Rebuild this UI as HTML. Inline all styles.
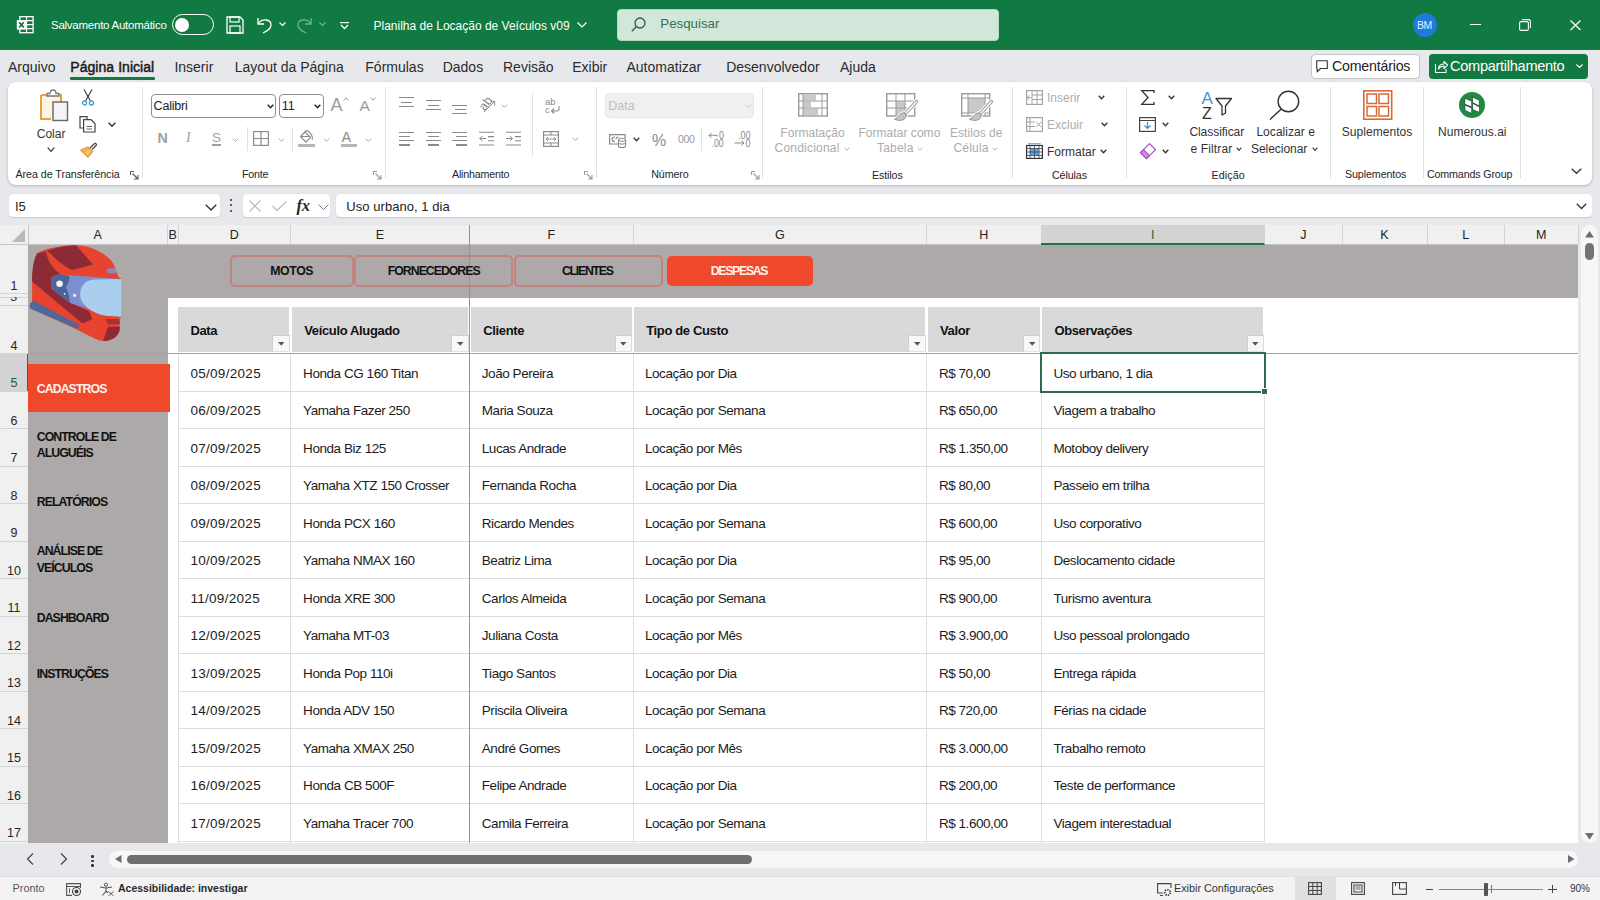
<!DOCTYPE html><html><head><meta charset="utf-8"><style>
*{margin:0;padding:0;box-sizing:border-box}
html,body{width:1600px;height:900px;overflow:hidden;background:#E6E8EC;font-family:"Liberation Sans",sans-serif;color:#222}
.a{position:absolute}
.t{position:absolute;white-space:nowrap;line-height:1}
svg{position:absolute;overflow:visible}
</style></head><body>
<div class="a" style="left:0px;top:0px;width:1600px;height:50px;background:#117A42;"></div>
<svg style="left:16px;top:16px;" width="18" height="17" viewBox="0 0 18 17"><rect x="3.8" y="0.7" width="13.3" height="16" fill="none" stroke="#fff" stroke-width="1.3"/><path d="M10.6 0.7 V16.7 M10.6 4.6 H17 M10.6 8.6 H17 M10.6 12.6 H17" stroke="#fff" stroke-width="1.1"/><rect x="0.8" y="4.1" width="9.4" height="9.5" fill="#fff"/><path d="M3.2 6.3 L7.8 11.4 M7.8 6.3 L3.2 11.4" stroke="#155E38" stroke-width="1.5"/></svg>
<div class="t" style="left:51px;top:19.62px;font-size:11.5px;color:#fff;font-weight:normal;letter-spacing:-0.25px;">Salvamento Automático</div>
<div class="a" style="left:172px;top:14px;width:42px;height:21px;border:1.5px solid #fff;border-radius:11px"></div>
<div class="a" style="left:175px;top:17.5px;width:14px;height:14px;background:#fff;border-radius:50%"></div>
<svg style="left:226px;top:16px;" width="18" height="18" viewBox="0 0 18 18"><path d="M1 1 H14 L17 4 V17 H1 Z" fill="none" stroke="#fff" stroke-width="1.3"/><rect x="4" y="1" width="9" height="5" fill="none" stroke="#fff" stroke-width="1.2"/><rect x="4" y="10" width="10" height="7" fill="none" stroke="#fff" stroke-width="1.2"/></svg>
<svg style="left:256px;top:16px;" width="17" height="18" viewBox="0 0 17 18"><path d="M2 2 V8 H8" fill="none" stroke="#fff" stroke-width="1.3"/><path d="M2 8 C6 2 15 3 15 9 C15 13 11 15 7 17" fill="none" stroke="#fff" stroke-width="1.3"/></svg>
<svg style="left:279px;top:22px;" width="7" height="5" viewBox="0 0 7 5"><path d="M0.5 0.5 L3.5 3.5 L6.5 0.5" fill="none" stroke="#fff" stroke-width="1.2"/></svg>
<svg style="left:296px;top:16px;" width="17" height="18" viewBox="0 0 17 18"><path d="M15 2 V8 H9" fill="none" stroke="#6FB58B" stroke-width="1.3"/><path d="M15 8 C11 2 2 3 2 9 C2 13 6 15 10 17" fill="none" stroke="#6FB58B" stroke-width="1.3"/></svg>
<svg style="left:319px;top:22px;" width="7" height="5" viewBox="0 0 7 5"><path d="M0.5 0.5 L3.5 3.5 L6.5 0.5" fill="none" stroke="#6FB58B" stroke-width="1.2"/></svg>
<svg style="left:340px;top:22px;" width="9" height="8" viewBox="0 0 9 8"><line x1="0" y1="0.6" x2="9" y2="0.6" stroke="#fff" stroke-width="1.2"/><path d="M1 3 L4.5 6.5 L8 3" fill="none" stroke="#fff" stroke-width="1.3"/></svg>
<div class="t" style="left:373.5px;top:19.55px;font-size:12px;color:#fff;font-weight:normal;letter-spacing:0px;">Planilha de Locação de Veículos v09</div>
<svg style="left:577px;top:22px;" width="10" height="6" viewBox="0 0 10 6"><path d="M0.5 0.5 L5 5 L9.5 0.5" fill="none" stroke="#fff" stroke-width="1.2"/></svg>
<div class="a" style="left:617px;top:9px;width:382px;height:32px;background:#D1E7D9;border-radius:4px;border:1px solid #B9D7C3"></div>
<svg style="left:631px;top:17px;" width="15" height="15" viewBox="0 0 15 15"><circle cx="9" cy="6" r="5" fill="none" stroke="#2F5E43" stroke-width="1.3"/><line x1="5.5" y1="9.5" x2="0.8" y2="14.2" stroke="#2F5E43" stroke-width="1.4"/></svg>
<div class="t" style="left:660.3px;top:17.30px;font-size:13.3px;color:#3A7150;font-weight:normal;letter-spacing:0px;">Pesquisar</div>
<div class="a" style="left:1413px;top:13px;width:24px;height:24px;background:#1C7BDB;border-radius:50%"></div>
<div class="t" style="left:1417px;top:19.88px;font-size:10.5px;color:#E2F0FF;font-weight:normal;letter-spacing:-0.5px;">BM</div>
<div class="a" style="left:1469.5px;top:23.8px;width:11px;height:1.3px;background:#fff;"></div>
<svg style="left:1519px;top:19px;" width="12" height="12" viewBox="0 0 12 12"><rect x="0.6" y="2.6" width="8.8" height="8.8" rx="1.5" fill="none" stroke="#fff" stroke-width="1.1"/><path d="M3 0.6 H9.5 Q11.4 0.6 11.4 2.5 V9" fill="none" stroke="#fff" stroke-width="1.1"/></svg>
<svg style="left:1569.5px;top:19.8px;" width="11" height="10.5" viewBox="0 0 11 10.5"><path d="M0.5 0.5 L10.5 10 M10.5 0.5 L0.5 10" stroke="#fff" stroke-width="1.2"/></svg>
<div class="t" style="left:8px;top:59.60px;font-size:14px;color:#2B2B2B;font-weight:normal;letter-spacing:0px;">Arquivo</div>
<div class="t" style="left:70.3px;top:59.60px;font-size:14px;color:#1A1A1A;font-weight:normal;letter-spacing:0.05px;-webkit-text-stroke:0.45px #1A1A1A;">Página Inicial</div>
<div class="t" style="left:174.4px;top:59.60px;font-size:14px;color:#2B2B2B;font-weight:normal;letter-spacing:0px;">Inserir</div>
<div class="t" style="left:234.8px;top:59.60px;font-size:14px;color:#2B2B2B;font-weight:normal;letter-spacing:0px;">Layout da Página</div>
<div class="t" style="left:365.3px;top:59.60px;font-size:14px;color:#2B2B2B;font-weight:normal;letter-spacing:0px;">Fórmulas</div>
<div class="t" style="left:442.7px;top:59.60px;font-size:14px;color:#2B2B2B;font-weight:normal;letter-spacing:0px;">Dados</div>
<div class="t" style="left:503px;top:59.60px;font-size:14px;color:#2B2B2B;font-weight:normal;letter-spacing:0px;">Revisão</div>
<div class="t" style="left:572.2px;top:59.60px;font-size:14px;color:#2B2B2B;font-weight:normal;letter-spacing:0px;">Exibir</div>
<div class="t" style="left:626.5px;top:59.60px;font-size:14px;color:#2B2B2B;font-weight:normal;letter-spacing:0px;">Automatizar</div>
<div class="t" style="left:726.2px;top:59.60px;font-size:14px;color:#2B2B2B;font-weight:normal;letter-spacing:0px;">Desenvolvedor</div>
<div class="t" style="left:840px;top:59.60px;font-size:14px;color:#2B2B2B;font-weight:normal;letter-spacing:0px;">Ajuda</div>
<div class="a" style="left:70px;top:77px;width:85px;height:2.5px;background:#117A42;border-radius:1px"></div>
<div class="a" style="left:1311px;top:54px;width:109px;height:25px;background:#fff;border:1px solid #C4C4C4;border-radius:4px"></div>
<svg style="left:1316px;top:60px;" width="12" height="13" viewBox="0 0 12 13"><path d="M0.7 0.7 H11.3 V8.5 H4.5 L1.2 11.8 V8.5 H0.7 Z" fill="none" stroke="#333" stroke-width="1.1" stroke-linejoin="round"/></svg>
<div class="t" style="left:1332px;top:59.23px;font-size:14.2px;color:#222;font-weight:normal;letter-spacing:-0.2px;">Comentários</div>
<div class="a" style="left:1429px;top:54px;width:159px;height:25px;background:#117A42;border-radius:4px"></div>
<svg style="left:1434px;top:59px;" width="14" height="15" viewBox="0 0 14 15"><path d="M1.5 5 V13.5 H12 V10" fill="none" stroke="#fff" stroke-width="1.1"/><path d="M4.5 10 C4.5 6.5 7 5 10 5 V2.3 L13.5 6 L10 9.7 V7 C7.5 7 6 8 4.5 10 Z" fill="none" stroke="#fff" stroke-width="1.1" stroke-linejoin="round"/></svg>
<div class="t" style="left:1450px;top:58.89px;font-size:14.6px;color:#fff;font-weight:normal;letter-spacing:-0.3px;">Compartilhamento</div>
<svg style="left:1576px;top:64px;" width="7" height="5" viewBox="0 0 7 5"><path d="M0.5 0.5 L3.5 3.5 L6.5 0.5" fill="none" stroke="#fff" stroke-width="1.2"/></svg>
<div class="a" style="left:8px;top:82px;width:1584px;height:103px;background:#fff;border-radius:8px;box-shadow:0 1px 3px rgba(0,0,0,0.22)"></div>
<svg style="left:39px;top:89px;" width="30" height="33" viewBox="0 0 30 33"><path d="M2 6 H9 M19 6 H22 V16" fill="none" stroke="#E6A23C" stroke-width="2"/><path d="M2 6 V30 H12" fill="none" stroke="#E6A23C" stroke-width="2"/><rect x="3" y="7" width="18" height="22" fill="#FDF3E2"/><path d="M8 7 V4.5 H11 Q11 1 14 1 Q17 1 17 4.5 H20 V7 Z" fill="#fff" stroke="#777" stroke-width="1.3"/><rect x="14" y="13" width="14.5" height="18.5" fill="#F4F4F4" stroke="#666" stroke-width="1.4"/></svg>
<div class="t" style="left:36.75px;top:127.80px;font-size:12px;color:#333;font-weight:normal;letter-spacing:0px;">Colar</div>
<svg style="left:47.0px;top:147.0px;" width="8" height="5" viewBox="0 0 8 5"><path d="M0.7 0.7 L4.0 4.3 L7.3 0.7" fill="none" stroke="#333" stroke-width="1.2"/></svg>
<svg style="left:81.5px;top:89px;" width="12" height="17" viewBox="0 0 12 17"><path d="M2 0.5 L8.5 12 M10 0.5 L3.5 12" stroke="#333" stroke-width="1.1" fill="none"/><circle cx="2.6" cy="14" r="2" fill="none" stroke="#3AA0D0" stroke-width="1.3"/><circle cx="9.4" cy="14" r="2" fill="none" stroke="#3AA0D0" stroke-width="1.3"/></svg>
<svg style="left:79px;top:116px;" width="18" height="17" viewBox="0 0 18 17"><path d="M8 3 V0.7 H1 V12 H4" fill="none" stroke="#444" stroke-width="1.2"/><path d="M4.6 3.6 H12 L16 7.6 V16 H4.6 Z" fill="#fff" stroke="#444" stroke-width="1.2"/><path d="M7.5 10.5 H13 M7.5 13 H13" stroke="#666" stroke-width="1"/></svg>
<svg style="left:107.75px;top:122.0px;" width="8" height="5" viewBox="0 0 8 5"><path d="M0.7 0.7 L4.0 4.3 L7.3 0.7" fill="none" stroke="#333" stroke-width="1.3"/></svg>
<svg style="left:80px;top:142px;" width="17" height="16" viewBox="0 0 17 16"><path d="M9.5 6.5 L14 2 Q15.5 0.6 16.2 2 L16.5 3 L12 7.5" fill="none" stroke="#444" stroke-width="1.2"/><path d="M8 5 L12.5 9.5 L8 15 L0.8 8.3 Z" fill="#F5C47A" stroke="#E39B2E" stroke-width="1.3"/><path d="M3 10 L9 7" stroke="#E39B2E" stroke-width="1"/></svg>
<div class="t" style="left:15.5px;top:168.91px;font-size:10.7px;color:#262626;font-weight:normal;letter-spacing:-0.05px;">Área de Transferência</div>
<svg style="left:130px;top:171px;" width="9" height="9" viewBox="0 0 9 9"><path d="M0.5 4 V0.5 H4" fill="none" stroke="#555" stroke-width="1"/><path d="M0.5 0.5" /><path d="M2.5 2.5 L8 8 M8 4 V8 H4" fill="none" stroke="#555" stroke-width="1.1"/><path d="M0.5 6 V8.5 H2.5" fill="none" stroke="#555" stroke-width="0"/></svg>
<div class="a" style="left:141.9px;top:87px;width:1px;height:91px;background:#E1E1E1;"></div>
<div class="a" style="left:151.25px;top:93.6px;width:125px;height:24.4px;border:1px solid #8F8F8F;border-radius:4px;background:#fff"></div>
<div class="t" style="left:153.6px;top:100.12px;font-size:12.5px;color:#222;font-weight:normal;letter-spacing:-0.2px;">Calibri</div>
<svg style="left:266.5px;top:103.75px;" width="7" height="4.5" viewBox="0 0 7 4.5"><path d="M0.7 0.7 L3.5 3.8 L6.3 0.7" fill="none" stroke="#222" stroke-width="1.4"/></svg>
<div class="a" style="left:278.6px;top:93.6px;width:45px;height:24.4px;border:1px solid #8F8F8F;border-radius:4px;background:#fff"></div>
<div class="t" style="left:281.7px;top:100.12px;font-size:12.5px;color:#222;font-weight:normal;letter-spacing:0px;">11</div>
<svg style="left:314.1px;top:103.75px;" width="7" height="4.5" viewBox="0 0 7 4.5"><path d="M0.7 0.7 L3.5 3.8 L6.3 0.7" fill="none" stroke="#222" stroke-width="1.4"/></svg>
<div class="t" style="left:330.5px;top:95.50px;font-size:18px;color:#9A9A9A;font-weight:normal;letter-spacing:0px;">A</div>
<svg style="left:342.5px;top:96.5px;" width="6" height="4" viewBox="0 0 6 4"><path d="M0.5 3.5 L3 0.8 L5.5 3.5" fill="none" stroke="#9A9A9A" stroke-width="1"/></svg>
<div class="t" style="left:359.5px;top:97.62px;font-size:15.5px;color:#9A9A9A;font-weight:normal;letter-spacing:0px;">A</div>
<svg style="left:369.5px;top:97px;" width="6" height="4" viewBox="0 0 6 4"><path d="M0.5 0.5 L3 3.2 L5.5 0.5" fill="none" stroke="#9A9A9A" stroke-width="1"/></svg>
<div class="t" style="left:157.5px;top:130.73px;font-size:14.2px;color:#9E9E9E;font-weight:bold;letter-spacing:0px;">N</div>
<div class="t" style="left:186px;top:130.90px;font-size:14px;color:#9E9E9E;font-weight:normal;letter-spacing:0px;font-family:'Liberation Serif',serif;"><i>I</i></div>
<div class="t" style="left:212px;top:131.03px;font-size:13.5px;color:#9E9E9E;font-weight:normal;letter-spacing:0px;">S</div>
<div class="a" style="left:212px;top:144px;width:9px;height:1.5px;background:#9E9E9E;"></div>
<svg style="left:232.1px;top:137.5px;" width="7" height="4" viewBox="0 0 7 4"><path d="M0.7 0.7 L3.5 3.3 L6.3 0.7" fill="none" stroke="#AAAAAA" stroke-width="1"/></svg>
<div class="a" style="left:246.8px;top:127px;width:1px;height:24.400000000000006px;background:#E1E1E1;"></div>
<svg style="left:253px;top:131px;" width="16" height="15" viewBox="0 0 16 15"><rect x="0.6" y="0.6" width="14.8" height="13.8" fill="none" stroke="#8C8C8C" stroke-width="1.2"/><path d="M8 0.6 V14.4 M0.6 7.5 H15.4" stroke="#8C8C8C" stroke-width="1.2"/></svg>
<svg style="left:277.5px;top:137.5px;" width="7" height="4" viewBox="0 0 7 4"><path d="M0.7 0.7 L3.5 3.3 L6.3 0.7" fill="none" stroke="#AAAAAA" stroke-width="1"/></svg>
<div class="a" style="left:291.5px;top:127px;width:1px;height:24.400000000000006px;background:#E1E1E1;"></div>
<svg style="left:298px;top:130px;" width="17" height="17" viewBox="0 0 17 17"><path d="M2.5 6.5 L7 2 L12.5 7.5 L8 12 Z" fill="none" stroke="#8C8C8C" stroke-width="1.2" stroke-linejoin="round"/><path d="M2.5 6.5 H12.5" stroke="#8C8C8C" stroke-width="1"/><path d="M7 2 Q8 -0.5 10.5 1.5 Q13 3.5 14 6 Q15 8.5 14 10" fill="none" stroke="#8C8C8C" stroke-width="1.1"/><rect x="0" y="14" width="17" height="3" fill="#B7B7B7"/></svg>
<svg style="left:322.5px;top:137.5px;" width="7" height="4" viewBox="0 0 7 4"><path d="M0.7 0.7 L3.5 3.3 L6.3 0.7" fill="none" stroke="#AAAAAA" stroke-width="1"/></svg>
<div class="t" style="left:341.5px;top:130.18px;font-size:14.5px;color:#8C8C8C;font-weight:normal;letter-spacing:0px;">A</div>
<div class="a" style="left:341px;top:144px;width:16px;height:3px;background:#B7B7B7;"></div>
<svg style="left:364.5px;top:137.5px;" width="7" height="4" viewBox="0 0 7 4"><path d="M0.7 0.7 L3.5 3.3 L6.3 0.7" fill="none" stroke="#AAAAAA" stroke-width="1"/></svg>
<div class="t" style="left:242px;top:168.91px;font-size:10.7px;color:#262626;font-weight:normal;letter-spacing:-0.25px;">Fonte</div>
<svg style="left:373px;top:170.5px;" width="9" height="9" viewBox="0 0 9 9"><path d="M0.5 4 V0.5 H4" fill="none" stroke="#9A9A9A" stroke-width="1"/><path d="M0.5 0.5" /><path d="M2.5 2.5 L8 8 M8 4 V8 H4" fill="none" stroke="#9A9A9A" stroke-width="1.1"/><path d="M0.5 6 V8.5 H2.5" fill="none" stroke="#9A9A9A" stroke-width="0"/></svg>
<div class="a" style="left:385.1px;top:87px;width:1px;height:91px;background:#E1E1E1;"></div>
<div class="a" style="left:399px;top:97.35000000000001px;width:15px;height:1.1px;background:#8A8A8A;"></div>
<div class="a" style="left:401px;top:101.65px;width:11px;height:1.1px;background:#8A8A8A;"></div>
<div class="a" style="left:399px;top:105.95px;width:15px;height:1.1px;background:#8A8A8A;"></div>
<div class="a" style="left:426px;top:100.25px;width:15px;height:1.1px;background:#8A8A8A;"></div>
<div class="a" style="left:428px;top:104.55px;width:11px;height:1.1px;background:#8A8A8A;"></div>
<div class="a" style="left:426px;top:108.75px;width:15px;height:1.1px;background:#8A8A8A;"></div>
<div class="a" style="left:452.4px;top:104.65px;width:15px;height:1.1px;background:#8A8A8A;"></div>
<div class="a" style="left:454.9px;top:108.75px;width:11px;height:1.1px;background:#8A8A8A;"></div>
<div class="a" style="left:452.4px;top:112.95px;width:15px;height:1.1px;background:#8A8A8A;"></div>
<svg style="left:478px;top:96px;" width="18" height="17" viewBox="0 0 18 17"><text x="0.5" y="12" font-size="12.5" font-family="Liberation Sans" fill="#8A8A8A" transform="rotate(-52 7 7.5)">ab</text><path d="M6 16 L16.5 5.5 M12.5 5.3 H16.7 V9.5" fill="none" stroke="#8A8A8A" stroke-width="1"/></svg>
<svg style="left:501.3px;top:104.2px;" width="7" height="4" viewBox="0 0 7 4"><path d="M0.7 0.7 L3.5 3.3 L6.3 0.7" fill="none" stroke="#AAAAAA" stroke-width="1"/></svg>
<div class="a" style="left:399px;top:131.64999999999998px;width:15px;height:1.1px;background:#8A8A8A;"></div>
<div class="a" style="left:399px;top:136.04999999999998px;width:11px;height:1.1px;background:#8A8A8A;"></div>
<div class="a" style="left:399px;top:140.25px;width:15px;height:1.1px;background:#8A8A8A;"></div>
<div class="a" style="left:399px;top:144.45px;width:11px;height:1.1px;background:#8A8A8A;"></div>
<div class="a" style="left:426px;top:131.64999999999998px;width:15px;height:1.1px;background:#8A8A8A;"></div>
<div class="a" style="left:428px;top:136.04999999999998px;width:11px;height:1.1px;background:#8A8A8A;"></div>
<div class="a" style="left:426px;top:140.25px;width:15px;height:1.1px;background:#8A8A8A;"></div>
<div class="a" style="left:428px;top:144.45px;width:11px;height:1.1px;background:#8A8A8A;"></div>
<div class="a" style="left:452.4px;top:131.64999999999998px;width:15px;height:1.1px;background:#8A8A8A;"></div>
<div class="a" style="left:456.4px;top:136.04999999999998px;width:11px;height:1.1px;background:#8A8A8A;"></div>
<div class="a" style="left:452.4px;top:140.25px;width:15px;height:1.1px;background:#8A8A8A;"></div>
<div class="a" style="left:456.4px;top:144.45px;width:11px;height:1.1px;background:#8A8A8A;"></div>
<svg style="left:479px;top:131px;" width="15" height="16" viewBox="0 0 15 16"><path d="M0 1.2 H15 M9 5.6 H15 M9 9.8 H15 M0 14 H15" stroke="#8A8A8A" stroke-width="1.1"/><path d="M7 7.5 H0.8 M3.3 5 L0.8 7.5 L3.3 10" fill="none" stroke="#8A8A8A" stroke-width="1"/></svg>
<svg style="left:506px;top:131px;" width="15" height="16" viewBox="0 0 15 16"><path d="M0 1.2 H15 M9 5.6 H15 M9 9.8 H15 M0 14 H15" stroke="#8A8A8A" stroke-width="1.1"/><path d="M0 7.5 H6.5 M4 5 L6.5 7.5 L4 10" fill="none" stroke="#8A8A8A" stroke-width="1"/></svg>
<div class="a" style="left:532.0px;top:92.6px;width:1px;height:63.900000000000006px;background:#E1E1E1;"></div>
<svg style="left:544.5px;top:97px;" width="15" height="17" viewBox="0 0 15 17"><text x="0" y="8" font-size="9.5" font-family="Liberation Sans" fill="#8A8A8A">ab</text><text x="0" y="16" font-size="9.5" font-family="Liberation Sans" fill="#8A8A8A">c</text><path d="M14 9 V12.5 Q14 14 12 14 H7 M9 11.5 L6.5 14 L9 16.5" fill="none" stroke="#8A8A8A" stroke-width="1.1"/></svg>
<svg style="left:542.5px;top:131px;" width="16" height="16" viewBox="0 0 16 16"><rect x="0.6" y="0.6" width="14.8" height="14.8" fill="none" stroke="#8A8A8A" stroke-width="1.2"/><path d="M0.6 4 H15.4 M0.6 12 H15.4 M8 0.6 V4 M8 12 V15.4" stroke="#8A8A8A" stroke-width="1"/><path d="M3 8 H13 M5 6 L3 8 L5 10 M11 6 L13 8 L11 10" fill="none" stroke="#8A8A8A" stroke-width="1"/></svg>
<svg style="left:572.0px;top:137.3px;" width="7" height="4" viewBox="0 0 7 4"><path d="M0.7 0.7 L3.5 3.3 L6.3 0.7" fill="none" stroke="#AAAAAA" stroke-width="1"/></svg>
<div class="t" style="left:452px;top:169.21px;font-size:10.7px;color:#262626;font-weight:normal;letter-spacing:-0.2px;">Alinhamento</div>
<svg style="left:584px;top:170.5px;" width="9" height="9" viewBox="0 0 9 9"><path d="M0.5 4 V0.5 H4" fill="none" stroke="#9A9A9A" stroke-width="1"/><path d="M0.5 0.5" /><path d="M2.5 2.5 L8 8 M8 4 V8 H4" fill="none" stroke="#9A9A9A" stroke-width="1.1"/><path d="M0.5 6 V8.5 H2.5" fill="none" stroke="#9A9A9A" stroke-width="0"/></svg>
<div class="a" style="left:595.5px;top:87px;width:1px;height:91px;background:#E1E1E1;"></div>
<div class="a" style="left:605.3px;top:93.4px;width:149px;height:24.2px;background:#F0F0F0;border-radius:4px;border:1px solid #E6E6E6"></div>
<div class="t" style="left:608.3px;top:99.97px;font-size:12.5px;color:#BDBDBD;font-weight:normal;letter-spacing:0px;">Data</div>
<svg style="left:745.0px;top:104.0px;" width="7" height="4" viewBox="0 0 7 4"><path d="M0.7 0.7 L3.5 3.3 L6.3 0.7" fill="none" stroke="#C4C4C4" stroke-width="1"/></svg>
<svg style="left:609px;top:134px;" width="18" height="14" viewBox="0 0 18 14"><path d="M12 10 H0.6 V0.6 H16 V4" fill="none" stroke="#8A8A8A" stroke-width="1.2"/><path d="M6 3 Q3 3 3 5.3 Q3 7.6 6 7.6 M9.5 3 Q7 3 7 5.3" fill="none" stroke="#8A8A8A" stroke-width="1.1"/><path d="M9.5 5.8 Q9.5 4.3 13 4.3 Q16.6 4.3 16.6 5.8 V12 Q16.6 13.5 13 13.5 Q9.5 13.5 9.5 12 Z" fill="#fff" stroke="#8A8A8A" stroke-width="1.1"/><path d="M9.5 5.8 Q9.5 7.3 13 7.3 Q16.6 7.3 16.6 5.8 M9.5 9.5 Q13 11 16.6 9.5" fill="none" stroke="#8A8A8A" stroke-width="1"/></svg>
<svg style="left:633.3px;top:137.35px;" width="7" height="4.5" viewBox="0 0 7 4.5"><path d="M0.7 0.7 L3.5 3.8 L6.3 0.7" fill="none" stroke="#333" stroke-width="1.3"/></svg>
<div class="t" style="left:652px;top:133.00px;font-size:16px;color:#8A8A8A;font-weight:normal;letter-spacing:0px;">%</div>
<div class="t" style="left:678px;top:134.07px;font-size:10.5px;color:#9A9A9A;font-weight:normal;letter-spacing:-0.3px;">000</div>
<div class="a" style="left:700.8px;top:126.6px;width:1px;height:24.80000000000001px;background:#E1E1E1;"></div>
<svg style="left:707.5px;top:130.5px;" width="17" height="17" viewBox="0 0 17 17"><text x="11" y="7.6" font-size="10" font-family="Liberation Sans" fill="#8A8A8A" transform="scale(1 1)" textLength="5" lengthAdjust="spacingAndGlyphs">0</text><text x="3.5" y="15.8" font-size="10" font-family="Liberation Sans" fill="#8A8A8A" textLength="12" lengthAdjust="spacingAndGlyphs">.00</text><path d="M10 5 Q6 3.5 1 4.5 M3.5 2 L1 4.5 L3.5 7" fill="none" stroke="#8A8A8A" stroke-width="1"/></svg>
<svg style="left:733.5px;top:130.5px;" width="17" height="17" viewBox="0 0 17 17"><text x="4" y="7.6" font-size="10" font-family="Liberation Sans" fill="#8A8A8A" textLength="12.5" lengthAdjust="spacingAndGlyphs">.00</text><text x="11.5" y="15.8" font-size="10" font-family="Liberation Sans" fill="#8A8A8A" textLength="5" lengthAdjust="spacingAndGlyphs">0</text><path d="M0.5 12 H10 M7.5 9.5 L10 12 L7.5 14.5" fill="none" stroke="#8A8A8A" stroke-width="1"/></svg>
<div class="t" style="left:651.2px;top:168.91px;font-size:10.7px;color:#262626;font-weight:normal;letter-spacing:-0.1px;">Número</div>
<svg style="left:750.8px;top:170.5px;" width="9" height="9" viewBox="0 0 9 9"><path d="M0.5 4 V0.5 H4" fill="none" stroke="#9A9A9A" stroke-width="1"/><path d="M0.5 0.5" /><path d="M2.5 2.5 L8 8 M8 4 V8 H4" fill="none" stroke="#9A9A9A" stroke-width="1.1"/><path d="M0.5 6 V8.5 H2.5" fill="none" stroke="#9A9A9A" stroke-width="0"/></svg>
<div class="a" style="left:762.1px;top:87px;width:1px;height:91px;background:#E1E1E1;"></div>
<svg style="left:797.5px;top:93px;" width="30" height="24" viewBox="0 0 30 24"><rect x="0.7" y="0.7" width="28.6" height="22.3" fill="#fff" stroke="#9B9B9B" stroke-width="1.4"/><rect x="5" y="1.5" width="13" height="6" fill="#C9C9C9"/><rect x="5" y="8.5" width="8" height="6" fill="#C9C9C9"/><rect x="5" y="15.5" width="15" height="6.5" fill="#C9C9C9"/><path d="M5 0.7 V23 M24 0.7 V23 M0.7 8 H29.3 M0.7 15 H29.3" stroke="#9B9B9B" stroke-width="1"/></svg>
<div class="t" style="left:780.3px;top:126.50px;font-size:12px;color:#ABABAB;font-weight:normal;letter-spacing:0.05px;">Formatação</div>
<div class="t" style="left:774.6px;top:142.30px;font-size:12px;color:#ABABAB;font-weight:normal;letter-spacing:0.2px;">Condicional</div>
<svg style="left:844.0px;top:147.0px;" width="6" height="4" viewBox="0 0 6 4"><path d="M0.7 0.7 L3.0 3.3 L5.3 0.7" fill="none" stroke="#B5B5B5" stroke-width="1"/></svg>
<svg style="left:886px;top:93px;" width="32" height="29" viewBox="0 0 32 29"><rect x="0.7" y="0.7" width="28" height="22.3" fill="#fff" stroke="#9B9B9B" stroke-width="1.4"/><rect x="10" y="8" width="9" height="14" fill="#C9C9C9"/><path d="M10 0.7 V23 M19 0.7 V23 M0.7 8 H28.7 M0.7 15 H28.7" stroke="#9B9B9B" stroke-width="1"/><path d="M30.5 8.5 L19.5 20.5" stroke="#fff" stroke-width="5.5" stroke-linecap="round"/><path d="M19.5 20.5 Q16.5 18.5 14 21.5 Q12 24.5 8.5 26.3 Q15.5 29 19 25.5 Q21.5 23 19.5 20.5 Z" fill="#fff" stroke="#fff" stroke-width="2.5"/><path d="M30.5 8.5 L19.8 20.2" stroke="#9B9B9B" stroke-width="3.4" stroke-linecap="round"/><path d="M30.3 8.7 L20 20" stroke="#fff" stroke-width="1.5" stroke-linecap="round"/><path d="M19.5 20.5 Q16.5 18.5 14 21.5 Q12 24.5 8.5 26.3 Q15.5 29 19 25.5 Q21.5 23 19.5 20.5 Z" fill="#C4C4C4" stroke="#8E8E8E" stroke-width="0.9"/></svg>
<div class="t" style="left:858.4px;top:126.50px;font-size:12px;color:#ABABAB;font-weight:normal;letter-spacing:0.05px;">Formatar como</div>
<div class="t" style="left:877px;top:142.30px;font-size:12px;color:#ABABAB;font-weight:normal;letter-spacing:0.2px;">Tabela</div>
<svg style="left:917.0px;top:147.0px;" width="6" height="4" viewBox="0 0 6 4"><path d="M0.7 0.7 L3.0 3.3 L5.3 0.7" fill="none" stroke="#B5B5B5" stroke-width="1"/></svg>
<svg style="left:960.8px;top:93px;" width="32" height="29" viewBox="0 0 32 29"><rect x="0.7" y="0.7" width="28" height="22.3" fill="#fff" stroke="#9B9B9B" stroke-width="1.4"/><rect x="7" y="5" width="17" height="15" fill="#C9C9C9"/><path d="M7 0.7 V23 M24 0.7 V23 M0.7 5 H28.7 M0.7 20 H28.7" stroke="#9B9B9B" stroke-width="1"/><path d="M30.5 8.5 L19.5 20.5" stroke="#fff" stroke-width="5.5" stroke-linecap="round"/><path d="M19.5 20.5 Q16.5 18.5 14 21.5 Q12 24.5 8.5 26.3 Q15.5 29 19 25.5 Q21.5 23 19.5 20.5 Z" fill="#fff" stroke="#fff" stroke-width="2.5"/><path d="M30.5 8.5 L19.8 20.2" stroke="#9B9B9B" stroke-width="3.4" stroke-linecap="round"/><path d="M30.3 8.7 L20 20" stroke="#fff" stroke-width="1.5" stroke-linecap="round"/><path d="M19.5 20.5 Q16.5 18.5 14 21.5 Q12 24.5 8.5 26.3 Q15.5 29 19 25.5 Q21.5 23 19.5 20.5 Z" fill="#C4C4C4" stroke="#8E8E8E" stroke-width="0.9"/></svg>
<div class="t" style="left:950px;top:126.50px;font-size:12px;color:#ABABAB;font-weight:normal;letter-spacing:0.05px;">Estilos de</div>
<div class="t" style="left:953.5px;top:142.30px;font-size:12px;color:#ABABAB;font-weight:normal;letter-spacing:0.2px;">Célula</div>
<svg style="left:992.0px;top:147.0px;" width="6" height="4" viewBox="0 0 6 4"><path d="M0.7 0.7 L3.0 3.3 L5.3 0.7" fill="none" stroke="#B5B5B5" stroke-width="1"/></svg>
<div class="t" style="left:871.9px;top:169.91px;font-size:10.7px;color:#262626;font-weight:normal;letter-spacing:-0.1px;">Estilos</div>
<div class="a" style="left:1012.3px;top:87px;width:1px;height:91px;background:#E1E1E1;"></div>
<svg style="left:1026px;top:90px;" width="17" height="15" viewBox="0 0 17 15"><rect x="0.6" y="0.6" width="15.8" height="13.8" fill="none" stroke="#A5A5A5" stroke-width="1.2"/><path d="M6 0.6 V14.4 M11 0.6 V14.4 M6 5 H16.4 M6 9.5 H16.4" stroke="#A5A5A5" stroke-width="1"/><path d="M1 7.5 H5 M3 5.5 L1 7.5 L3 9.5" fill="none" stroke="#A5A5A5" stroke-width="1"/></svg>
<div class="t" style="left:1047px;top:92.30px;font-size:12px;color:#ADADAD;font-weight:normal;letter-spacing:0px;">Inserir</div>
<svg style="left:1098.3px;top:95.15px;" width="7" height="4.5" viewBox="0 0 7 4.5"><path d="M0.7 0.7 L3.5 3.8 L6.3 0.7" fill="none" stroke="#333" stroke-width="1.3"/></svg>
<svg style="left:1026px;top:117px;" width="17" height="15" viewBox="0 0 17 15"><rect x="0.6" y="0.6" width="15.8" height="13.8" fill="none" stroke="#A5A5A5" stroke-width="1.2"/><path d="M0.6 5 H9 M0.6 9.5 H9 M4 0.6 V14.4" stroke="#A5A5A5" stroke-width="1"/><path d="M10.5 5 L15 10 M15 5 L10.5 10" stroke="#A5A5A5" stroke-width="1"/></svg>
<div class="t" style="left:1047px;top:118.50px;font-size:12px;color:#ADADAD;font-weight:normal;letter-spacing:0px;">Excluir</div>
<svg style="left:1100.9px;top:121.75px;" width="7" height="4.5" viewBox="0 0 7 4.5"><path d="M0.7 0.7 L3.5 3.8 L6.3 0.7" fill="none" stroke="#333" stroke-width="1.3"/></svg>
<svg style="left:1026px;top:143px;" width="17" height="16" viewBox="0 0 17 16"><rect x="4" y="5.5" width="9" height="7" fill="#56A8E8"/><rect x="0.6" y="2.5" width="15.8" height="12.9" fill="none" stroke="#333" stroke-width="1.2"/><path d="M4 2.5 V15.4 M8.5 2.5 V15.4 M13 2.5 V15.4 M0.6 5.5 H16.4 M0.6 9 H16.4 M0.6 12.5 H16.4" stroke="#444" stroke-width="0.8"/><path d="M3 0.8 H14 M3 0 V1.6 M14 0 V1.6" stroke="#3D8BD8" stroke-width="0.9"/></svg>
<div class="t" style="left:1047px;top:145.80px;font-size:12px;color:#333;font-weight:normal;letter-spacing:0px;">Formatar</div>
<svg style="left:1100.3px;top:148.75px;" width="7" height="4.5" viewBox="0 0 7 4.5"><path d="M0.7 0.7 L3.5 3.8 L6.3 0.7" fill="none" stroke="#333" stroke-width="1.3"/></svg>
<div class="t" style="left:1052px;top:169.71px;font-size:10.7px;color:#262626;font-weight:normal;letter-spacing:-0.1px;">Células</div>
<div class="a" style="left:1126.0px;top:87px;width:1px;height:91px;background:#E1E1E1;"></div>
<svg style="left:1141px;top:90px;" width="14" height="15" viewBox="0 0 14 15"><path d="M13 3 V0.7 H0.8 L7 7.5 L0.8 14.3 H13 V12" fill="none" stroke="#333" stroke-width="1.3"/></svg>
<svg style="left:1168.4px;top:94.75px;" width="7" height="4.5" viewBox="0 0 7 4.5"><path d="M0.7 0.7 L3.5 3.8 L6.3 0.7" fill="none" stroke="#333" stroke-width="1.3"/></svg>
<svg style="left:1139px;top:117px;" width="17" height="15" viewBox="0 0 17 15"><rect x="0.6" y="0.6" width="15.8" height="13.8" fill="#fff" stroke="#444" stroke-width="1.2"/><path d="M0.6 3.5 H16.4" stroke="#444" stroke-width="1"/><path d="M8.5 5 V11.5 M5.5 8.5 L8.5 11.5 L11.5 8.5" fill="none" stroke="#2F8FD8" stroke-width="1.2"/></svg>
<svg style="left:1161.5px;top:121.75px;" width="7" height="4.5" viewBox="0 0 7 4.5"><path d="M0.7 0.7 L3.5 3.8 L6.3 0.7" fill="none" stroke="#333" stroke-width="1.3"/></svg>
<svg style="left:1139.5px;top:142.8px;" width="16" height="16" viewBox="0 0 16 16"><path d="M0.5 9.7 L9.5 0.7 L15.5 6.7 L6.5 15.7 Z" fill="#fff" stroke="#A14AB5" stroke-width="1.2" stroke-linejoin="round"/><path d="M0.5 9.7 L3.5 6.7 L9.5 12.7 L6.5 15.7 Z" fill="#D68AE6" stroke="#A14AB5" stroke-width="1.1" stroke-linejoin="round"/></svg>
<svg style="left:1161.5px;top:148.75px;" width="7" height="4.5" viewBox="0 0 7 4.5"><path d="M0.7 0.7 L3.5 3.8 L6.3 0.7" fill="none" stroke="#333" stroke-width="1.3"/></svg>
<svg style="left:1201.5px;top:91px;" width="31" height="29" viewBox="0 0 31 29"><text x="-0.5" y="13" font-size="17" font-family="Liberation Sans" fill="#3A9AD8">A</text><text x="0" y="28" font-size="16" font-family="Liberation Sans" fill="#333">Z</text><path d="M14 7.5 H29.5 L23.5 15 V22 L20 24 V15 Z" fill="none" stroke="#333" stroke-width="1.3" stroke-linejoin="round"/></svg>
<div class="t" style="left:1189.4px;top:126.30px;font-size:12px;color:#333;font-weight:normal;letter-spacing:-0.05px;">Classificar</div>
<div class="t" style="left:1190.4px;top:142.80px;font-size:12px;color:#333;font-weight:normal;letter-spacing:0.15px;">e Filtrar</div>
<svg style="left:1235.5px;top:146.5px;" width="6" height="4" viewBox="0 0 6 4"><path d="M0.7 0.7 L3.0 3.3 L5.3 0.7" fill="none" stroke="#333" stroke-width="1.1"/></svg>
<svg style="left:1269px;top:90px;" width="31" height="30" viewBox="0 0 31 30"><circle cx="19.4" cy="11.5" r="10.3" fill="none" stroke="#333" stroke-width="1.4"/><path d="M12.3 19 L1 29.5" stroke="#333" stroke-width="1.4"/></svg>
<div class="t" style="left:1256.4px;top:126.30px;font-size:12px;color:#333;font-weight:normal;letter-spacing:0.05px;">Localizar e</div>
<div class="t" style="left:1251px;top:142.80px;font-size:12px;color:#333;font-weight:normal;letter-spacing:-0.05px;">Selecionar</div>
<svg style="left:1312.0px;top:146.5px;" width="6" height="4" viewBox="0 0 6 4"><path d="M0.7 0.7 L3.0 3.3 L5.3 0.7" fill="none" stroke="#333" stroke-width="1.1"/></svg>
<div class="t" style="left:1211.6px;top:169.71px;font-size:10.7px;color:#262626;font-weight:normal;letter-spacing:0.1px;">Edição</div>
<div class="a" style="left:1329.7px;top:87px;width:1px;height:91px;background:#E1E1E1;"></div>
<svg style="left:1362.9px;top:90px;" width="29.5" height="30" viewBox="0 0 29.5 30"><rect x="0.8" y="0.8" width="27.9" height="28.4" fill="none" stroke="#D86A3A" stroke-width="1.6"/><rect x="4" y="4" width="9.5" height="9.5" fill="none" stroke="#D86A3A" stroke-width="1.5"/><rect x="16" y="4" width="9.5" height="9.5" fill="none" stroke="#D86A3A" stroke-width="1.5"/><rect x="4" y="16.5" width="9.5" height="9.5" fill="none" stroke="#D86A3A" stroke-width="1.5"/><rect x="16" y="16.5" width="9.5" height="9.5" fill="none" stroke="#D86A3A" stroke-width="1.5"/></svg>
<div class="t" style="left:1341.8px;top:126.10px;font-size:12px;color:#333;font-weight:normal;letter-spacing:0.05px;">Suplementos</div>
<div class="t" style="left:1345px;top:169.41px;font-size:10.7px;color:#262626;font-weight:normal;letter-spacing:-0.1px;">Suplementos</div>
<div class="a" style="left:1422.8px;top:87px;width:1px;height:91px;background:#E1E1E1;"></div>
<svg style="left:1458.5px;top:91.8px;" width="26" height="26" viewBox="0 0 26 26"><circle cx="13" cy="13" r="13" fill="#208A42"/><path d="M5.9 6.2 L12.7 9.2 V15.1 L5.7 12.1 Z M5.7 13 L12.7 16 V21.5 L6.1 18.5 Z M13.5 4.9 L20.3 8.3 V14 L13.5 10.5 Z M13.5 11.3 L20.5 14.9 V20.4 L13.5 17.5 Z" fill="#fff" stroke="#17402A" stroke-width="0.7"/></svg>
<div class="t" style="left:1438px;top:126.10px;font-size:12px;color:#333;font-weight:normal;letter-spacing:0.05px;">Numerous.ai</div>
<div class="t" style="left:1427px;top:169.41px;font-size:10.7px;color:#262626;font-weight:normal;letter-spacing:-0.15px;">Commands Group</div>
<div class="a" style="left:1520.2px;top:87px;width:1px;height:91px;background:#E1E1E1;"></div>
<svg style="left:1570.9px;top:167.6px;" width="11" height="6" viewBox="0 0 11 6"><path d="M0.7 0.7 L5.5 5.3 L10.3 0.7" fill="none" stroke="#333" stroke-width="1.3"/></svg>
<div class="a" style="left:9px;top:194px;width:211px;height:23px;background:#fff;border-radius:4px;box-shadow:0 0.5px 1px rgba(0,0,0,0.12)"></div>
<div class="t" style="left:15px;top:199.95px;font-size:13px;color:#222;font-weight:normal;letter-spacing:0px;">I5</div>
<svg style="left:205px;top:204px;" width="12" height="7" viewBox="0 0 12 7"><path d="M0.8 0.8 L6 6 L11.2 0.8" fill="none" stroke="#333" stroke-width="1.4"/></svg>
<div class="a" style="left:230px;top:198.5px;width:2.2px;height:2.2px;background:#333;border-radius:50%"></div>
<div class="a" style="left:230px;top:204px;width:2.2px;height:2.2px;background:#333;border-radius:50%"></div>
<div class="a" style="left:230px;top:209.5px;width:2.2px;height:2.2px;background:#333;border-radius:50%"></div>
<div class="a" style="left:243px;top:194px;width:87px;height:23px;background:#fff;border-radius:4px;box-shadow:0 0.5px 1px rgba(0,0,0,0.12)"></div>
<svg style="left:249px;top:200px;" width="12" height="12" viewBox="0 0 12 12"><path d="M0.5 0.5 L11.5 11.5 M11.5 0.5 L0.5 11.5" stroke="#B8B8B8" stroke-width="1.1"/></svg>
<svg style="left:272px;top:201px;" width="15" height="10" viewBox="0 0 15 10"><path d="M0.5 5 L5 9.5 L14.5 0.5" fill="none" stroke="#B8B8B8" stroke-width="1.1"/></svg>
<div class="t" style="left:296.5px;top:197.97px;font-size:16.5px;color:#2A2A2A;font-weight:bold;letter-spacing:-0.3px;font-family:'Liberation Serif',serif;"><i>fx</i></div>
<svg style="left:318px;top:204px;" width="11" height="6" viewBox="0 0 11 6"><path d="M0.5 0.5 L5.5 5.5 L10.5 0.5" fill="none" stroke="#777" stroke-width="1"/></svg>
<div class="a" style="left:336px;top:194px;width:1256px;height:23px;background:#fff;border-radius:4px;box-shadow:0 0.5px 1px rgba(0,0,0,0.12)"></div>
<div class="t" style="left:346.3px;top:199.70px;font-size:13px;color:#222;font-weight:normal;letter-spacing:0.05px;">Uso urbano, 1 dia</div>
<svg style="left:1576px;top:203px;" width="11" height="7" viewBox="0 0 11 7"><path d="M0.8 0.8 L5.5 5.5 L10.2 0.8" fill="none" stroke="#333" stroke-width="1.3"/></svg>
<div class="a" style="left:0px;top:225px;width:1578px;height:19.5px;background:#F0F0F0;"></div>
<div class="a" style="left:0px;top:244px;width:1578px;height:1px;background:#C6C6C6;"></div>
<svg style="left:12px;top:229px;" width="14" height="13" viewBox="0 0 14 13"><path d="M13 0 V13 H0 Z" fill="#B9B9B9"/></svg>
<div class="a" style="left:27.5px;top:225px;width:1px;height:619px;background:#C9C9C9;"></div>
<div class="a" style="left:167.0px;top:225px;width:1px;height:19px;background:#D2D2D2;"></div>
<div class="t" style="left:28px;width:139.5px;text-align:center;top:229.07px;font-size:12.5px;color:#222">A</div>
<div class="a" style="left:177.5px;top:225px;width:1px;height:19px;background:#D2D2D2;"></div>
<div class="t" style="left:167.5px;width:10.5px;text-align:center;top:229.07px;font-size:12.5px;color:#222">B</div>
<div class="a" style="left:290.0px;top:225px;width:1px;height:19px;background:#D2D2D2;"></div>
<div class="t" style="left:178px;width:112.5px;text-align:center;top:229.07px;font-size:12.5px;color:#222">D</div>
<div class="a" style="left:469.0px;top:225px;width:1px;height:19px;background:#D2D2D2;"></div>
<div class="t" style="left:290.5px;width:179.0px;text-align:center;top:229.07px;font-size:12.5px;color:#222">E</div>
<div class="a" style="left:632.5px;top:225px;width:1px;height:19px;background:#D2D2D2;"></div>
<div class="t" style="left:469.5px;width:163.5px;text-align:center;top:229.07px;font-size:12.5px;color:#222">F</div>
<div class="a" style="left:926.0px;top:225px;width:1px;height:19px;background:#D2D2D2;"></div>
<div class="t" style="left:633px;width:293.5px;text-align:center;top:229.07px;font-size:12.5px;color:#222">G</div>
<div class="a" style="left:1040.5px;top:225px;width:1px;height:19px;background:#D2D2D2;"></div>
<div class="t" style="left:926.5px;width:114.5px;text-align:center;top:229.07px;font-size:12.5px;color:#222">H</div>
<div class="a" style="left:1041px;top:225px;width:223.5px;height:19px;background:#D3D3D3;"></div>
<div class="a" style="left:1041px;top:242.5px;width:223.5px;height:2px;background:#217346;"></div>
<div class="a" style="left:1264.0px;top:225px;width:1px;height:19px;background:#D2D2D2;"></div>
<div class="t" style="left:1041px;width:223.5px;text-align:center;top:229.07px;font-size:12.5px;color:#1E5E3A">I</div>
<div class="a" style="left:1341.5px;top:225px;width:1px;height:19px;background:#D2D2D2;"></div>
<div class="t" style="left:1264.5px;width:77.5px;text-align:center;top:229.07px;font-size:12.5px;color:#222">J</div>
<div class="a" style="left:1426.5px;top:225px;width:1px;height:19px;background:#D2D2D2;"></div>
<div class="t" style="left:1342px;width:85px;text-align:center;top:229.07px;font-size:12.5px;color:#222">K</div>
<div class="a" style="left:1504.0px;top:225px;width:1px;height:19px;background:#D2D2D2;"></div>
<div class="t" style="left:1427px;width:77.5px;text-align:center;top:229.07px;font-size:12.5px;color:#222">L</div>
<div class="a" style="left:1577.5px;top:225px;width:1px;height:19px;background:#D2D2D2;"></div>
<div class="t" style="left:1504.5px;width:73.5px;text-align:center;top:229.07px;font-size:12.5px;color:#222">M</div>
<div class="a" style="left:0px;top:244.5px;width:27.5px;height:599px;background:#F0F0F0;"></div>
<div class="a" style="left:0px;top:293.0px;width:27.5px;height:1px;background:#D4D4D4;"></div>
<div class="t" style="left:0;width:28px;text-align:center;top:279.68px;font-size:12.5px;color:#262626">1</div>
<div class="a" style="left:0px;top:296.5px;width:27.5px;height:1px;background:#D4D4D4;"></div>
<div class="a" style="left:0px;top:304.5px;width:27.5px;height:1px;background:#D4D4D4;"></div>
<div class="a" style="left:0;top:297px;width:27.5px;height:8px;overflow:hidden"><div class="t" style="left:0;width:27.5px;text-align:center;top:-6px;font-size:12.5px;color:#333">3</div></div>
<div class="a" style="left:0px;top:353.3px;width:27.5px;height:1px;background:#D4D4D4;"></div>
<div class="t" style="left:0;width:28px;text-align:center;top:339.98px;font-size:12.5px;color:#262626">4</div>
<div class="a" style="left:0px;top:353.8px;width:27.5px;height:37.5px;background:#D3D3D3;"></div>
<div class="a" style="left:26.5px;top:353.8px;width:1.5px;height:37.5px;background:#217346;"></div>
<div class="a" style="left:0px;top:390.8px;width:27.5px;height:1px;background:#D4D4D4;"></div>
<div class="t" style="left:0;width:28px;text-align:center;top:377.48px;font-size:12.5px;color:#1E5E3A">5</div>
<div class="a" style="left:0px;top:428.3px;width:27.5px;height:1px;background:#D4D4D4;"></div>
<div class="t" style="left:0;width:28px;text-align:center;top:414.98px;font-size:12.5px;color:#262626">6</div>
<div class="a" style="left:0px;top:465.8px;width:27.5px;height:1px;background:#D4D4D4;"></div>
<div class="t" style="left:0;width:28px;text-align:center;top:452.48px;font-size:12.5px;color:#262626">7</div>
<div class="a" style="left:0px;top:503.3px;width:27.5px;height:1px;background:#D4D4D4;"></div>
<div class="t" style="left:0;width:28px;text-align:center;top:489.98px;font-size:12.5px;color:#262626">8</div>
<div class="a" style="left:0px;top:540.8px;width:27.5px;height:1px;background:#D4D4D4;"></div>
<div class="t" style="left:0;width:28px;text-align:center;top:527.47px;font-size:12.5px;color:#262626">9</div>
<div class="a" style="left:0px;top:578.3px;width:27.5px;height:1px;background:#D4D4D4;"></div>
<div class="t" style="left:0;width:28px;text-align:center;top:564.97px;font-size:12.5px;color:#262626">10</div>
<div class="a" style="left:0px;top:615.8px;width:27.5px;height:1px;background:#D4D4D4;"></div>
<div class="t" style="left:0;width:28px;text-align:center;top:602.47px;font-size:12.5px;color:#262626">11</div>
<div class="a" style="left:0px;top:653.3px;width:27.5px;height:1px;background:#D4D4D4;"></div>
<div class="t" style="left:0;width:28px;text-align:center;top:639.97px;font-size:12.5px;color:#262626">12</div>
<div class="a" style="left:0px;top:690.8px;width:27.5px;height:1px;background:#D4D4D4;"></div>
<div class="t" style="left:0;width:28px;text-align:center;top:677.47px;font-size:12.5px;color:#262626">13</div>
<div class="a" style="left:0px;top:728.3px;width:27.5px;height:1px;background:#D4D4D4;"></div>
<div class="t" style="left:0;width:28px;text-align:center;top:714.97px;font-size:12.5px;color:#262626">14</div>
<div class="a" style="left:0px;top:765.8px;width:27.5px;height:1px;background:#D4D4D4;"></div>
<div class="t" style="left:0;width:28px;text-align:center;top:752.47px;font-size:12.5px;color:#262626">15</div>
<div class="a" style="left:0px;top:803.3px;width:27.5px;height:1px;background:#D4D4D4;"></div>
<div class="t" style="left:0;width:28px;text-align:center;top:789.97px;font-size:12.5px;color:#262626">16</div>
<div class="a" style="left:0px;top:840.8px;width:27.5px;height:1px;background:#D4D4D4;"></div>
<div class="t" style="left:0;width:28px;text-align:center;top:827.47px;font-size:12.5px;color:#262626">17</div>
<div class="a" style="left:28px;top:245px;width:1550px;height:598px;background:#FFFFFF;"></div>
<div class="a" style="left:28px;top:245px;width:1550px;height:53px;background:#ADA9A8;"></div>
<div class="a" style="left:28px;top:245px;width:139.5px;height:598px;background:#ADA9A8;"></div>
<svg style="left:28px;top:244px" width="96" height="98" viewBox="0 0 882 900">
<path d="M85,85 C150,40 330,10 450,12 C600,20 740,100 790,190 L805,240 L830,300 L860,322 L860,668 L838,690 L845,790 C830,855 770,892 690,892 C640,882 600,862 560,842 L420,772 L40,600 C12,585 10,550 38,528 L38,380 C38,250 55,140 85,85 Z" fill="#E8432E"/>
<path d="M175,62 C260,30 360,14 440,12 L598,188 L405,238 C330,200 280,160 250,130 Z" fill="#8C2A35"/>
<path d="M85,85 L165,68 C180,150 225,228 300,278 L215,300 L215,412 L385,540 L560,618 L592,690 L500,730 L38,345 L38,300 C42,200 58,130 85,85 Z" fill="#8C2A35"/>
<path d="M22,548 C8,565 14,592 40,602 L455,778 L470,742 L45,520 Z" fill="#50679B"/>
<path d="M212,340 C212,300 240,282 290,280 L860,322 L860,668 L640,625 L385,540 L240,430 C222,410 212,385 212,340 Z" fill="#7C8FD1"/>
<path d="M212,340 C212,300 240,282 290,280 C330,280 370,290 382,298 L372,352 L348,398 C368,440 382,480 385,540 L240,430 C222,410 212,385 212,340 Z" fill="#4E6497"/>
<path d="M600,326 L860,322 L860,668 L712,660 C610,642 495,575 480,485 C470,395 520,336 600,326 Z" fill="#A9CEEE"/>
<rect x="722" y="226" width="90" height="44" rx="22" fill="#7C8FD1"/>
<path d="M712,690 L840,690 L845,735 L735,740 Z" fill="#A93132"/>
<path d="M735,760 L845,760 C840,840 790,885 690,892 Z" fill="#8C2A35"/>
<circle cx="290" cy="365" r="30" fill="#F4F4F8"/>
<circle cx="428" cy="472" r="14" fill="#F4F4F8"/>
<circle cx="336" cy="458" r="8" fill="#F4F4F8"/>
</svg>
<div class="a" style="left:178px;top:306.7px;width:111px;height:45.5px;background:#D9D9D9;"></div>
<div class="t" style="left:190.4px;top:323.95px;font-size:13px;color:#111;font-weight:bold;letter-spacing:-0.35px;">Data</div>
<div class="a" style="left:272px;top:335.3px;width:17.5px;height:17px;background:#F8F8F8;border:1px solid #CFCFCF;border-bottom-color:#E2E2E2;border-right-color:#DADADA"></div>
<svg style="left:277.7px;top:342.2px;" width="6.5" height="3.8" viewBox="0 0 6.5 3.8"><path d="M0 0 H6.5 L3.25 3.8 Z" fill="#555"/></svg>
<div class="a" style="left:292px;top:306.7px;width:176px;height:45.5px;background:#D9D9D9;"></div>
<div class="t" style="left:304.2px;top:323.95px;font-size:13px;color:#111;font-weight:bold;letter-spacing:-0.35px;">Veículo Alugado</div>
<div class="a" style="left:451px;top:335.3px;width:17.5px;height:17px;background:#F8F8F8;border:1px solid #CFCFCF;border-bottom-color:#E2E2E2;border-right-color:#DADADA"></div>
<svg style="left:456.7px;top:342.2px;" width="6.5" height="3.8" viewBox="0 0 6.5 3.8"><path d="M0 0 H6.5 L3.25 3.8 Z" fill="#555"/></svg>
<div class="a" style="left:471px;top:306.7px;width:160.70000000000005px;height:45.5px;background:#D9D9D9;"></div>
<div class="t" style="left:483.2px;top:323.95px;font-size:13px;color:#111;font-weight:bold;letter-spacing:-0.35px;">Cliente</div>
<div class="a" style="left:614.7px;top:335.3px;width:17.5px;height:17px;background:#F8F8F8;border:1px solid #CFCFCF;border-bottom-color:#E2E2E2;border-right-color:#DADADA"></div>
<svg style="left:620.4000000000001px;top:342.2px;" width="6.5" height="3.8" viewBox="0 0 6.5 3.8"><path d="M0 0 H6.5 L3.25 3.8 Z" fill="#555"/></svg>
<div class="a" style="left:634px;top:306.7px;width:291px;height:45.5px;background:#D9D9D9;"></div>
<div class="t" style="left:646.2px;top:323.95px;font-size:13px;color:#111;font-weight:bold;letter-spacing:-0.35px;">Tipo de Custo</div>
<div class="a" style="left:908px;top:335.3px;width:17.5px;height:17px;background:#F8F8F8;border:1px solid #CFCFCF;border-bottom-color:#E2E2E2;border-right-color:#DADADA"></div>
<svg style="left:913.7px;top:342.2px;" width="6.5" height="3.8" viewBox="0 0 6.5 3.8"><path d="M0 0 H6.5 L3.25 3.8 Z" fill="#555"/></svg>
<div class="a" style="left:927.8px;top:306.7px;width:112.0px;height:45.5px;background:#D9D9D9;"></div>
<div class="t" style="left:940.0px;top:323.95px;font-size:13px;color:#111;font-weight:bold;letter-spacing:-0.35px;">Valor</div>
<div class="a" style="left:1022.8px;top:335.3px;width:17.5px;height:17px;background:#F8F8F8;border:1px solid #CFCFCF;border-bottom-color:#E2E2E2;border-right-color:#DADADA"></div>
<svg style="left:1028.5px;top:342.2px;" width="6.5" height="3.8" viewBox="0 0 6.5 3.8"><path d="M0 0 H6.5 L3.25 3.8 Z" fill="#555"/></svg>
<div class="a" style="left:1042.2px;top:306.7px;width:221.29999999999995px;height:45.5px;background:#D9D9D9;"></div>
<div class="t" style="left:1054.4px;top:323.95px;font-size:13px;color:#111;font-weight:bold;letter-spacing:-0.35px;">Observações</div>
<div class="a" style="left:1246.5px;top:335.3px;width:17.5px;height:17px;background:#F8F8F8;border:1px solid #CFCFCF;border-bottom-color:#E2E2E2;border-right-color:#DADADA"></div>
<svg style="left:1252.2px;top:342.2px;" width="6.5" height="3.8" viewBox="0 0 6.5 3.8"><path d="M0 0 H6.5 L3.25 3.8 Z" fill="#555"/></svg>
<div class="a" style="left:178px;top:390.8px;width:1086.5px;height:1px;background:#DEDEDE;"></div>
<div class="t" style="left:190.4px;top:366.62px;font-size:13.5px;color:#1C1C1C;font-weight:normal;letter-spacing:0.3px;">05/09/2025</div>
<div class="t" style="left:303.1px;top:366.62px;font-size:13.5px;color:#1C1C1C;font-weight:normal;letter-spacing:-0.45px;">Honda CG 160 Titan</div>
<div class="t" style="left:481.8px;top:366.62px;font-size:13.5px;color:#1C1C1C;font-weight:normal;letter-spacing:-0.45px;">João Pereira</div>
<div class="t" style="left:645px;top:366.62px;font-size:13.5px;color:#1C1C1C;font-weight:normal;letter-spacing:-0.45px;">Locação por Dia</div>
<div class="t" style="left:938.9px;top:366.62px;font-size:13.5px;color:#1C1C1C;font-weight:normal;letter-spacing:-0.45px;">R$ 70,00</div>
<div class="t" style="left:1053.5px;top:366.62px;font-size:13.5px;color:#1C1C1C;font-weight:normal;letter-spacing:-0.45px;">Uso urbano, 1 dia</div>
<div class="a" style="left:178px;top:428.3px;width:1086.5px;height:1px;background:#DEDEDE;"></div>
<div class="t" style="left:190.4px;top:404.12px;font-size:13.5px;color:#1C1C1C;font-weight:normal;letter-spacing:0.3px;">06/09/2025</div>
<div class="t" style="left:303.1px;top:404.12px;font-size:13.5px;color:#1C1C1C;font-weight:normal;letter-spacing:-0.45px;">Yamaha Fazer 250</div>
<div class="t" style="left:481.8px;top:404.12px;font-size:13.5px;color:#1C1C1C;font-weight:normal;letter-spacing:-0.45px;">Maria Souza</div>
<div class="t" style="left:645px;top:404.12px;font-size:13.5px;color:#1C1C1C;font-weight:normal;letter-spacing:-0.45px;">Locação por Semana</div>
<div class="t" style="left:938.9px;top:404.12px;font-size:13.5px;color:#1C1C1C;font-weight:normal;letter-spacing:-0.45px;">R$ 650,00</div>
<div class="t" style="left:1053.5px;top:404.12px;font-size:13.5px;color:#1C1C1C;font-weight:normal;letter-spacing:-0.45px;">Viagem a trabalho</div>
<div class="a" style="left:178px;top:465.8px;width:1086.5px;height:1px;background:#DEDEDE;"></div>
<div class="t" style="left:190.4px;top:441.62px;font-size:13.5px;color:#1C1C1C;font-weight:normal;letter-spacing:0.3px;">07/09/2025</div>
<div class="t" style="left:303.1px;top:441.62px;font-size:13.5px;color:#1C1C1C;font-weight:normal;letter-spacing:-0.45px;">Honda Biz 125</div>
<div class="t" style="left:481.8px;top:441.62px;font-size:13.5px;color:#1C1C1C;font-weight:normal;letter-spacing:-0.45px;">Lucas Andrade</div>
<div class="t" style="left:645px;top:441.62px;font-size:13.5px;color:#1C1C1C;font-weight:normal;letter-spacing:-0.45px;">Locação por Mês</div>
<div class="t" style="left:938.9px;top:441.62px;font-size:13.5px;color:#1C1C1C;font-weight:normal;letter-spacing:-0.45px;">R$ 1.350,00</div>
<div class="t" style="left:1053.5px;top:441.62px;font-size:13.5px;color:#1C1C1C;font-weight:normal;letter-spacing:-0.45px;">Motoboy delivery</div>
<div class="a" style="left:178px;top:503.3px;width:1086.5px;height:1px;background:#DEDEDE;"></div>
<div class="t" style="left:190.4px;top:479.12px;font-size:13.5px;color:#1C1C1C;font-weight:normal;letter-spacing:0.3px;">08/09/2025</div>
<div class="t" style="left:303.1px;top:479.12px;font-size:13.5px;color:#1C1C1C;font-weight:normal;letter-spacing:-0.45px;">Yamaha XTZ 150 Crosser</div>
<div class="t" style="left:481.8px;top:479.12px;font-size:13.5px;color:#1C1C1C;font-weight:normal;letter-spacing:-0.45px;">Fernanda Rocha</div>
<div class="t" style="left:645px;top:479.12px;font-size:13.5px;color:#1C1C1C;font-weight:normal;letter-spacing:-0.45px;">Locação por Dia</div>
<div class="t" style="left:938.9px;top:479.12px;font-size:13.5px;color:#1C1C1C;font-weight:normal;letter-spacing:-0.45px;">R$ 80,00</div>
<div class="t" style="left:1053.5px;top:479.12px;font-size:13.5px;color:#1C1C1C;font-weight:normal;letter-spacing:-0.45px;">Passeio em trilha</div>
<div class="a" style="left:178px;top:540.8px;width:1086.5px;height:1px;background:#DEDEDE;"></div>
<div class="t" style="left:190.4px;top:516.62px;font-size:13.5px;color:#1C1C1C;font-weight:normal;letter-spacing:0.3px;">09/09/2025</div>
<div class="t" style="left:303.1px;top:516.62px;font-size:13.5px;color:#1C1C1C;font-weight:normal;letter-spacing:-0.45px;">Honda PCX 160</div>
<div class="t" style="left:481.8px;top:516.62px;font-size:13.5px;color:#1C1C1C;font-weight:normal;letter-spacing:-0.45px;">Ricardo Mendes</div>
<div class="t" style="left:645px;top:516.62px;font-size:13.5px;color:#1C1C1C;font-weight:normal;letter-spacing:-0.45px;">Locação por Semana</div>
<div class="t" style="left:938.9px;top:516.62px;font-size:13.5px;color:#1C1C1C;font-weight:normal;letter-spacing:-0.45px;">R$ 600,00</div>
<div class="t" style="left:1053.5px;top:516.62px;font-size:13.5px;color:#1C1C1C;font-weight:normal;letter-spacing:-0.45px;">Uso corporativo</div>
<div class="a" style="left:178px;top:578.3px;width:1086.5px;height:1px;background:#DEDEDE;"></div>
<div class="t" style="left:190.4px;top:554.12px;font-size:13.5px;color:#1C1C1C;font-weight:normal;letter-spacing:0.3px;">10/09/2025</div>
<div class="t" style="left:303.1px;top:554.12px;font-size:13.5px;color:#1C1C1C;font-weight:normal;letter-spacing:-0.45px;">Yamaha NMAX 160</div>
<div class="t" style="left:481.8px;top:554.12px;font-size:13.5px;color:#1C1C1C;font-weight:normal;letter-spacing:-0.45px;">Beatriz Lima</div>
<div class="t" style="left:645px;top:554.12px;font-size:13.5px;color:#1C1C1C;font-weight:normal;letter-spacing:-0.45px;">Locação por Dia</div>
<div class="t" style="left:938.9px;top:554.12px;font-size:13.5px;color:#1C1C1C;font-weight:normal;letter-spacing:-0.45px;">R$ 95,00</div>
<div class="t" style="left:1053.5px;top:554.12px;font-size:13.5px;color:#1C1C1C;font-weight:normal;letter-spacing:-0.45px;">Deslocamento cidade</div>
<div class="a" style="left:178px;top:615.8px;width:1086.5px;height:1px;background:#DEDEDE;"></div>
<div class="t" style="left:190.4px;top:591.62px;font-size:13.5px;color:#1C1C1C;font-weight:normal;letter-spacing:0.3px;">11/09/2025</div>
<div class="t" style="left:303.1px;top:591.62px;font-size:13.5px;color:#1C1C1C;font-weight:normal;letter-spacing:-0.45px;">Honda XRE 300</div>
<div class="t" style="left:481.8px;top:591.62px;font-size:13.5px;color:#1C1C1C;font-weight:normal;letter-spacing:-0.45px;">Carlos Almeida</div>
<div class="t" style="left:645px;top:591.62px;font-size:13.5px;color:#1C1C1C;font-weight:normal;letter-spacing:-0.45px;">Locação por Semana</div>
<div class="t" style="left:938.9px;top:591.62px;font-size:13.5px;color:#1C1C1C;font-weight:normal;letter-spacing:-0.45px;">R$ 900,00</div>
<div class="t" style="left:1053.5px;top:591.62px;font-size:13.5px;color:#1C1C1C;font-weight:normal;letter-spacing:-0.45px;">Turismo aventura</div>
<div class="a" style="left:178px;top:653.3px;width:1086.5px;height:1px;background:#DEDEDE;"></div>
<div class="t" style="left:190.4px;top:629.12px;font-size:13.5px;color:#1C1C1C;font-weight:normal;letter-spacing:0.3px;">12/09/2025</div>
<div class="t" style="left:303.1px;top:629.12px;font-size:13.5px;color:#1C1C1C;font-weight:normal;letter-spacing:-0.45px;">Yamaha MT-03</div>
<div class="t" style="left:481.8px;top:629.12px;font-size:13.5px;color:#1C1C1C;font-weight:normal;letter-spacing:-0.45px;">Juliana Costa</div>
<div class="t" style="left:645px;top:629.12px;font-size:13.5px;color:#1C1C1C;font-weight:normal;letter-spacing:-0.45px;">Locação por Mês</div>
<div class="t" style="left:938.9px;top:629.12px;font-size:13.5px;color:#1C1C1C;font-weight:normal;letter-spacing:-0.45px;">R$ 3.900,00</div>
<div class="t" style="left:1053.5px;top:629.12px;font-size:13.5px;color:#1C1C1C;font-weight:normal;letter-spacing:-0.45px;">Uso pessoal prolongado</div>
<div class="a" style="left:178px;top:690.8px;width:1086.5px;height:1px;background:#DEDEDE;"></div>
<div class="t" style="left:190.4px;top:666.62px;font-size:13.5px;color:#1C1C1C;font-weight:normal;letter-spacing:0.3px;">13/09/2025</div>
<div class="t" style="left:303.1px;top:666.62px;font-size:13.5px;color:#1C1C1C;font-weight:normal;letter-spacing:-0.45px;">Honda Pop 110i</div>
<div class="t" style="left:481.8px;top:666.62px;font-size:13.5px;color:#1C1C1C;font-weight:normal;letter-spacing:-0.45px;">Tiago Santos</div>
<div class="t" style="left:645px;top:666.62px;font-size:13.5px;color:#1C1C1C;font-weight:normal;letter-spacing:-0.45px;">Locação por Dia</div>
<div class="t" style="left:938.9px;top:666.62px;font-size:13.5px;color:#1C1C1C;font-weight:normal;letter-spacing:-0.45px;">R$ 50,00</div>
<div class="t" style="left:1053.5px;top:666.62px;font-size:13.5px;color:#1C1C1C;font-weight:normal;letter-spacing:-0.45px;">Entrega rápida</div>
<div class="a" style="left:178px;top:728.3px;width:1086.5px;height:1px;background:#DEDEDE;"></div>
<div class="t" style="left:190.4px;top:704.12px;font-size:13.5px;color:#1C1C1C;font-weight:normal;letter-spacing:0.3px;">14/09/2025</div>
<div class="t" style="left:303.1px;top:704.12px;font-size:13.5px;color:#1C1C1C;font-weight:normal;letter-spacing:-0.45px;">Honda ADV 150</div>
<div class="t" style="left:481.8px;top:704.12px;font-size:13.5px;color:#1C1C1C;font-weight:normal;letter-spacing:-0.45px;">Priscila Oliveira</div>
<div class="t" style="left:645px;top:704.12px;font-size:13.5px;color:#1C1C1C;font-weight:normal;letter-spacing:-0.45px;">Locação por Semana</div>
<div class="t" style="left:938.9px;top:704.12px;font-size:13.5px;color:#1C1C1C;font-weight:normal;letter-spacing:-0.45px;">R$ 720,00</div>
<div class="t" style="left:1053.5px;top:704.12px;font-size:13.5px;color:#1C1C1C;font-weight:normal;letter-spacing:-0.45px;">Férias na cidade</div>
<div class="a" style="left:178px;top:765.8px;width:1086.5px;height:1px;background:#DEDEDE;"></div>
<div class="t" style="left:190.4px;top:741.62px;font-size:13.5px;color:#1C1C1C;font-weight:normal;letter-spacing:0.3px;">15/09/2025</div>
<div class="t" style="left:303.1px;top:741.62px;font-size:13.5px;color:#1C1C1C;font-weight:normal;letter-spacing:-0.45px;">Yamaha XMAX 250</div>
<div class="t" style="left:481.8px;top:741.62px;font-size:13.5px;color:#1C1C1C;font-weight:normal;letter-spacing:-0.45px;">André Gomes</div>
<div class="t" style="left:645px;top:741.62px;font-size:13.5px;color:#1C1C1C;font-weight:normal;letter-spacing:-0.45px;">Locação por Mês</div>
<div class="t" style="left:938.9px;top:741.62px;font-size:13.5px;color:#1C1C1C;font-weight:normal;letter-spacing:-0.45px;">R$ 3.000,00</div>
<div class="t" style="left:1053.5px;top:741.62px;font-size:13.5px;color:#1C1C1C;font-weight:normal;letter-spacing:-0.45px;">Trabalho remoto</div>
<div class="a" style="left:178px;top:803.3px;width:1086.5px;height:1px;background:#DEDEDE;"></div>
<div class="t" style="left:190.4px;top:779.12px;font-size:13.5px;color:#1C1C1C;font-weight:normal;letter-spacing:0.3px;">16/09/2025</div>
<div class="t" style="left:303.1px;top:779.12px;font-size:13.5px;color:#1C1C1C;font-weight:normal;letter-spacing:-0.45px;">Honda CB 500F</div>
<div class="t" style="left:481.8px;top:779.12px;font-size:13.5px;color:#1C1C1C;font-weight:normal;letter-spacing:-0.45px;">Felipe Andrade</div>
<div class="t" style="left:645px;top:779.12px;font-size:13.5px;color:#1C1C1C;font-weight:normal;letter-spacing:-0.45px;">Locação por Dia</div>
<div class="t" style="left:938.9px;top:779.12px;font-size:13.5px;color:#1C1C1C;font-weight:normal;letter-spacing:-0.45px;">R$ 200,00</div>
<div class="t" style="left:1053.5px;top:779.12px;font-size:13.5px;color:#1C1C1C;font-weight:normal;letter-spacing:-0.45px;">Teste de performance</div>
<div class="a" style="left:178px;top:840.8px;width:1086.5px;height:1px;background:#DEDEDE;"></div>
<div class="t" style="left:190.4px;top:816.62px;font-size:13.5px;color:#1C1C1C;font-weight:normal;letter-spacing:0.3px;">17/09/2025</div>
<div class="t" style="left:303.1px;top:816.62px;font-size:13.5px;color:#1C1C1C;font-weight:normal;letter-spacing:-0.45px;">Yamaha Tracer 700</div>
<div class="t" style="left:481.8px;top:816.62px;font-size:13.5px;color:#1C1C1C;font-weight:normal;letter-spacing:-0.45px;">Camila Ferreira</div>
<div class="t" style="left:645px;top:816.62px;font-size:13.5px;color:#1C1C1C;font-weight:normal;letter-spacing:-0.45px;">Locação por Semana</div>
<div class="t" style="left:938.9px;top:816.62px;font-size:13.5px;color:#1C1C1C;font-weight:normal;letter-spacing:-0.45px;">R$ 1.600,00</div>
<div class="t" style="left:1053.5px;top:816.62px;font-size:13.5px;color:#1C1C1C;font-weight:normal;letter-spacing:-0.45px;">Viagem interestadual</div>
<div class="a" style="left:177.5px;top:353px;width:1px;height:490px;background:#DEDEDE;"></div>
<div class="a" style="left:289.5px;top:353px;width:1px;height:490px;background:#DEDEDE;"></div>
<div class="a" style="left:632.5px;top:353px;width:1px;height:490px;background:#DEDEDE;"></div>
<div class="a" style="left:926.0px;top:353px;width:1px;height:490px;background:#DEDEDE;"></div>
<div class="a" style="left:1040.5px;top:353px;width:1px;height:490px;background:#DEDEDE;"></div>
<div class="a" style="left:1263.5px;top:353px;width:1px;height:490px;background:#DEDEDE;"></div>
<div class="a" style="left:28px;top:352.5px;width:1550px;height:1.6px;background:#A3A3A3;"></div>
<div class="a" style="left:469px;top:225px;width:1.2px;height:618px;background:#939393;"></div>
<div class="a" style="left:1040px;top:352px;width:225.5px;height:40.5px;border:2px solid #2F6B4C"></div>
<div class="a" style="left:1262px;top:389px;width:5px;height:5px;background:#2F6B4C;outline:1px solid #fff"></div>
<div class="a" style="left:229.75px;top:255px;width:123.75px;height:31.5px;border:2px solid #C0837D;border-radius:5px"></div>
<div class="a" style="left:354px;top:255px;width:159px;height:31.5px;border:2px solid #C0837D;border-radius:5px"></div>
<div class="a" style="left:514px;top:255px;width:149px;height:31.5px;border:2px solid #C0837D;border-radius:5px"></div>
<div class="a" style="left:666.6px;top:255.6px;width:146.4px;height:30.5px;background:#F0482A;border-radius:5px"></div>
<div class="t" style="left:270.25px;top:265.30px;font-size:12.3px;color:#111;font-weight:bold;letter-spacing:-0.4px;">MOTOS</div>
<div class="t" style="left:387.8px;top:265.30px;font-size:12.3px;color:#111;font-weight:bold;letter-spacing:-1.0px;">FORNECEDORES</div>
<div class="t" style="left:561.9px;top:265.30px;font-size:12.3px;color:#111;font-weight:bold;letter-spacing:-1.25px;">CLIENTES</div>
<div class="t" style="left:710.7px;top:265.05px;font-size:12.3px;color:#FFF3EE;font-weight:bold;letter-spacing:-1.3px;">DESPESAS</div>
<div class="a" style="left:28.3px;top:364px;width:141.7px;height:48.3px;background:#F0482A;"></div>
<div class="t" style="left:36.7px;top:382.55px;font-size:12.3px;color:#FFF3EE;font-weight:bold;letter-spacing:-0.9px;">CADASTROS</div>
<div class="t" style="left:36.7px;top:431.25px;font-size:12.3px;color:#111;font-weight:bold;letter-spacing:-0.92px;">CONTROLE DE</div>
<div class="t" style="left:36.7px;top:447.25px;font-size:12.3px;color:#111;font-weight:bold;letter-spacing:-0.92px;">ALUGUÉIS</div>
<div class="t" style="left:36.7px;top:495.94px;font-size:12.3px;color:#111;font-weight:bold;letter-spacing:-0.92px;">RELATÓRIOS</div>
<div class="t" style="left:36.7px;top:545.34px;font-size:12.3px;color:#111;font-weight:bold;letter-spacing:-0.92px;">ANÁLISE DE</div>
<div class="t" style="left:36.7px;top:561.75px;font-size:12.3px;color:#111;font-weight:bold;letter-spacing:-0.92px;">VEÍCULOS</div>
<div class="t" style="left:36.7px;top:611.84px;font-size:12.3px;color:#111;font-weight:bold;letter-spacing:-0.92px;">DASHBOARD</div>
<div class="t" style="left:36.7px;top:667.54px;font-size:12.3px;color:#111;font-weight:bold;letter-spacing:-0.92px;">INSTRUÇÕES</div>
<div class="a" style="left:1580.5px;top:225px;width:17px;height:618px;background:#F7F7F7;border-radius:8.5px"></div>
<svg style="left:1585px;top:230.5px;" width="9" height="6.5" viewBox="0 0 9 6.5"><path d="M4.5 0 L9 6.5 H0 Z" fill="#6E6E6E"/></svg>
<div class="a" style="left:1585px;top:242.5px;width:9px;height:17px;background:#737373;border-radius:4.5px"></div>
<svg style="left:1585px;top:833px;" width="9" height="6.5" viewBox="0 0 9 6.5"><path d="M0 0 H9 L4.5 6.5 Z" fill="#6E6E6E"/></svg>
<svg style="left:26px;top:853px;" width="8" height="12" viewBox="0 0 8 12"><path d="M7 0.5 L1.5 6 L7 11.5" fill="none" stroke="#444" stroke-width="1.2"/></svg>
<svg style="left:60px;top:853px;" width="8" height="12" viewBox="0 0 8 12"><path d="M1 0.5 L6.5 6 L1 11.5" fill="none" stroke="#444" stroke-width="1.2"/></svg>
<div class="a" style="left:91px;top:855px;width:2.5px;height:2.5px;background:#333;border-radius:50%"></div>
<div class="a" style="left:91px;top:859.5px;width:2.5px;height:2.5px;background:#333;border-radius:50%"></div>
<div class="a" style="left:91px;top:864px;width:2.5px;height:2.5px;background:#333;border-radius:50%"></div>
<div class="a" style="left:109.4px;top:851px;width:1469px;height:16.75px;background:#F7F7F7;border-radius:8.4px"></div>
<svg style="left:114.6px;top:855px;" width="6.5" height="8" viewBox="0 0 6.5 8"><path d="M6.5 0 V8 L0 4 Z" fill="#6E6E6E"/></svg>
<div class="a" style="left:126.9px;top:855px;width:625.6px;height:9px;background:#6F6F6F;border-radius:4.5px"></div>
<svg style="left:1567.5px;top:855px;" width="6.5" height="8" viewBox="0 0 6.5 8"><path d="M0 0 V8 L6.5 4 Z" fill="#6E6E6E"/></svg>
<div class="a" style="left:0px;top:876px;width:1600px;height:24px;background:#F3F3F3;border-top:1px solid #E0E0E0"></div>
<div class="t" style="left:12.6px;top:883.07px;font-size:10.8px;color:#555;font-weight:normal;letter-spacing:0px;">Pronto</div>
<div class="t" style="left:118px;top:883.33px;font-size:10.5px;color:#2A2A2A;font-weight:bold;letter-spacing:0px;">Acessibilidade: investigar</div>
<div class="t" style="left:1174px;top:883.07px;font-size:10.8px;color:#333;font-weight:normal;letter-spacing:0px;">Exibir Configurações</div>
<div class="t" style="left:1570px;top:883.75px;font-size:10px;color:#333;font-weight:normal;letter-spacing:0px;">90%</div>
<svg style="left:65.5px;top:882.5px;" width="16" height="13" viewBox="0 0 16 13"><path d="M14.5 5 V0.6 H0.6 V12.4 H6" fill="none" stroke="#555" stroke-width="1.1"/><path d="M0.6 3.5 H14.5 M3.5 5.5 V10" stroke="#555" stroke-width="1"/><circle cx="10.5" cy="8.5" r="4" fill="none" stroke="#444" stroke-width="1.1"/><circle cx="10.5" cy="8.5" r="2" fill="#444"/></svg>
<svg style="left:99px;top:882.5px;" width="15" height="13" viewBox="0 0 15 13"><circle cx="7" cy="1.8" r="1.6" fill="none" stroke="#555" stroke-width="1"/><path d="M1 4 L7 5 L13 4 M7 5 V8 L3.5 12.5 M7 8 L9 10" fill="none" stroke="#555" stroke-width="1.1"/><path d="M9.5 8.5 L14.5 12.8 M14.5 8.5 L9.5 12.8" stroke="#555" stroke-width="1"/></svg>
<svg style="left:1156.5px;top:882.5px;" width="15" height="14" viewBox="0 0 15 14"><path d="M6 10 H0.6 V0.6 H14 V5" fill="none" stroke="#444" stroke-width="1.1"/><path d="M3 12.5 H6" stroke="#444" stroke-width="1"/><circle cx="10.5" cy="9.5" r="2.8" fill="none" stroke="#444" stroke-width="1.6" stroke-dasharray="1.5 1"/></svg>
<div class="a" style="left:1295.3px;top:877px;width:41px;height:23px;background:#E0E0E0;"></div>
<svg style="left:1308px;top:881.7px;" width="14" height="13" viewBox="0 0 14 13"><rect x="0.6" y="0.6" width="12.8" height="11.8" fill="none" stroke="#444" stroke-width="1.1"/><path d="M4.8 0.6 V12.4 M9.2 0.6 V12.4 M0.6 4.5 H13.4 M0.6 8.5 H13.4" stroke="#444" stroke-width="1"/></svg>
<svg style="left:1350.5px;top:881.7px;" width="14" height="13" viewBox="0 0 14 13"><rect x="0.6" y="0.6" width="12.8" height="11.8" fill="none" stroke="#444" stroke-width="1.1"/><rect x="3" y="3" width="8" height="7" fill="none" stroke="#444" stroke-width="1"/><path d="M4.5 5 H9.5 M4.5 7 H9.5" stroke="#444" stroke-width="0.8"/></svg>
<svg style="left:1391.6px;top:881.7px;" width="15" height="13" viewBox="0 0 15 13"><rect x="0.6" y="0.6" width="13.8" height="11.8" fill="none" stroke="#444" stroke-width="1.1"/><path d="M7.5 0.6 V7 H14.4 M3.5 0.6 V4" fill="none" stroke="#444" stroke-width="1"/></svg>
<div class="a" style="left:1426px;top:888.5px;width:7px;height:1.2px;background:#444;"></div>
<div class="a" style="left:1439px;top:888.5px;width:103.5px;height:1px;background:#888;"></div>
<div class="a" style="left:1483.6px;top:883px;width:4.5px;height:13px;background:#555;border-radius:1px"></div>
<div class="a" style="left:1490.5px;top:885px;width:1px;height:8px;background:#777;"></div>
<div class="a" style="left:1548px;top:888.5px;width:8.5px;height:1.2px;background:#444;"></div>
<div class="a" style="left:1551.65px;top:884.8px;width:1.2px;height:8.5px;background:#444;"></div>
</body></html>
